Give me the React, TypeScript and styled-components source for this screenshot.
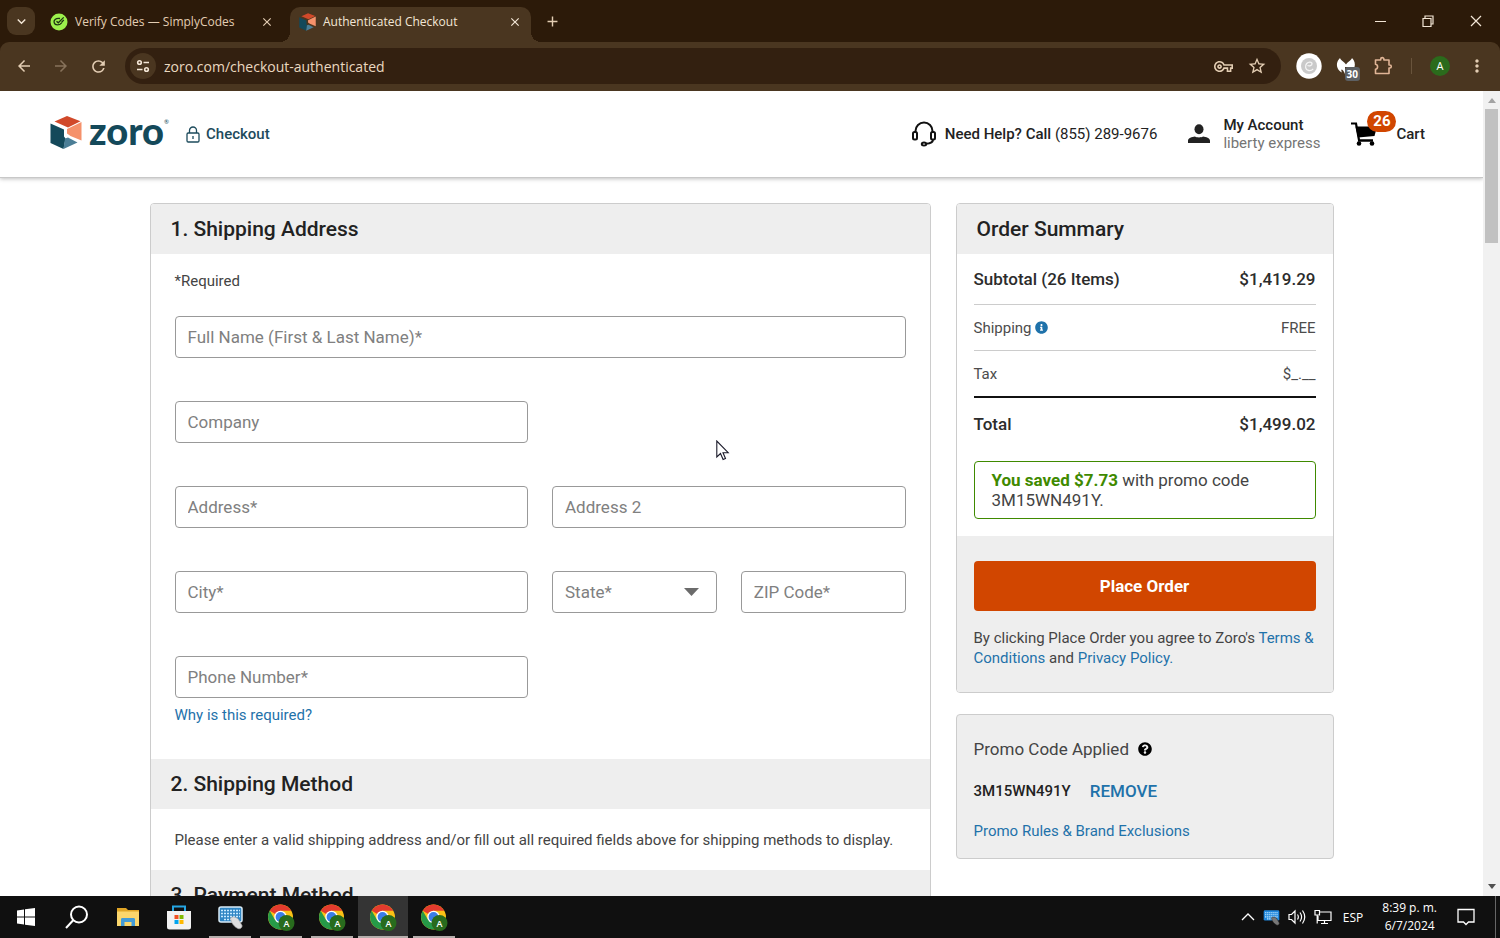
import React from 'react';
import styled, { createGlobalStyle, css } from 'styled-components';
import { FaInfoCircle, FaQuestionCircle } from 'react-icons/fa';
import {
  MdArrowBack,
  MdArrowForward,
  MdClose,
  MdAdd,
  MdKeyboardArrowDown,
  MdRefresh,
  MdStarOutline,
  MdMoreVert,
  MdOutlineVpnKey,
} from 'react-icons/md';

const roboto = 'Roboto, "Liberation Sans", sans-serif';
const ui = '"Open Sans", "Noto Sans", sans-serif';

const GlobalStyle = createGlobalStyle`
  *, *::before, *::after { box-sizing: border-box; }
  body { margin: 0; background: #fff; font-family: ${roboto}; color: #444; }
  button, input, select { font: inherit; margin: 0; }
  button { border: 0; padding: 0; background: none; color: inherit; cursor: pointer; }
  svg { display: block; flex: none; }
  h1, h2, p, dl, dd, dt { margin: 0; }
  a { text-decoration: none; }
`;

const Screen = styled.div`
  display: flex;
  flex-direction: column;
  height: 100vh;
  overflow: hidden;
  position: relative;
`;

/* ---------- Browser chrome ---------- */

const TabStrip = styled.div`
  display: flex;
  align-items: center;
  flex: none;
  height: 42px;
  padding-left: 7px;
  background: #2c1a09;
  color: #e3cdb3;
  font-family: ${ui};
`;

const TabSearch = styled.button`
  display: grid;
  place-items: center;
  width: 28px;
  height: 28px;
  border-radius: 9px;
  background: #4a3620;
  color: #f3e6d6;
`;

const Tab = styled.div<{ $active?: boolean }>`
  position: relative;
  display: flex;
  align-items: center;
  gap: 7px;
  align-self: flex-end;
  width: 247px;
  height: 35px;
  margin-left: 8px;
  padding: 0 15px 6px 7px;
  font-size: 12px;
  ${(p) =>
    p.$active &&
    css`
      width: 241px;
      margin-left: 0;
      padding: 0 8px 6px 9px;
      border-radius: 10px 10px 0 0;
      background: #4a3620;
      color: #f3e6d6;
      &::before,
      &::after {
        content: '';
        position: absolute;
        bottom: 0;
        width: 10px;
        height: 10px;
      }
      &::before {
        left: -10px;
        background: radial-gradient(circle at 0 0, transparent 10px, #4a3620 10px);
      }
      &::after {
        right: -10px;
        background: radial-gradient(circle at 100% 0, transparent 10px, #4a3620 10px);
      }
    `}
`;

const TabTitle = styled.span`
  flex: 1;
  white-space: nowrap;
`;

const IconButton = styled.button<{ $size?: number; $dim?: boolean }>`
  display: grid;
  place-items: center;
  flex: none;
  width: ${(p) => p.$size ?? 17}px;
  height: ${(p) => p.$size ?? 17}px;
  opacity: ${(p) => (p.$dim ? 0.4 : 1)};
`;

const NewTab = styled(IconButton)`
  margin-left: 8px;
`;

const WindowControls = styled.div`
  display: flex;
  margin-left: auto;
  color: #f3e6d6;
`;

const WindowButton = styled.button`
  display: grid;
  place-items: center;
  width: 48px;
  height: 42px;
`;

const ToolbarBack = styled.div`
  flex: none;
  background: #2c1a09;
`;

const Toolbar = styled.div`
  display: flex;
  align-items: center;
  height: 49px;
  padding: 0 8px 1px 9px;
  gap: 7px;
  border-radius: 9px 9px 0 0;
  background: #4a3620;
  color: #e3cdb3;
  font-family: ${ui};
`;

const Omnibox = styled.div`
  display: flex;
  align-items: center;
  flex: 1;
  height: 36px;
  margin: 0 6px 0 5px;
  padding: 0 9px 0 5px;
  gap: 4px;
  border-radius: 18px;
  background: #332010;
`;

const SiteInfo = styled.button`
  display: grid;
  place-items: center;
  width: 26px;
  height: 26px;
  border-radius: 50%;
  background: #4a3620;
  color: #f3e6d6;
`;

const UrlInput = styled.input`
  flex: 1;
  min-width: 0;
  padding: 0 0 0 4px;
  border: 0;
  outline: 0;
  background: transparent;
  color: #ead8c0;
  font-size: 14px;
`;

const Extension = styled.button`
  position: relative;
  display: grid;
  place-items: center;
  width: 30px;
  height: 30px;
`;

const ExtensionBadge = styled.span`
  position: absolute;
  right: 1px;
  bottom: 0;
  padding: 0 2px;
  border-radius: 3px;
  background: #5d6063;
  color: #fff;
  font-size: 10px;
  font-weight: 700;
  line-height: 14px;
`;

const Divider = styled.span`
  width: 1px;
  height: 16px;
  margin: 0 6px;
  background: #69543c;
`;

const Avatar = styled.button`
  width: 20px;
  height: 20px;
  margin: 0 5px;
  border-radius: 50%;
  background: #2b6b1c;
  color: #fff;
  font-size: 11px;
  line-height: 20px;
`;

/* ---------- Site ---------- */

const Viewport = styled.div`
  display: flex;
  flex: 1;
  min-height: 0;
`;

const Page = styled.div`
  flex: 1;
  min-width: 0;
  overflow: hidden;
  background: #fff;
`;

const SiteHeader = styled.header`
  display: flex;
  align-items: center;
  height: 87px;
  padding: 0 58px 0 50px;
  border-bottom: 1px solid #c8c8c8;
  box-shadow: 0 1px 4px rgba(0, 0, 0, 0.25);
  color: #222;
  font-size: 15px;
`;

const Logo = styled.a`
  display: flex;
  align-items: center;
  gap: 7px;
  padding-bottom: 3px;
  color: #14495a;
`;

const Wordmark = styled.span`
  display: flex;
  padding-bottom: 6px;
  font-family: Lato, sans-serif;
  font-size: 38px;
  font-weight: 900;
  line-height: 32px;

  sup {
    padding-top: 5px;
    font-size: 6px;
    font-weight: 400;
    line-height: 6px;
  }
`;

const CheckoutMark = styled.h1`
  display: flex;
  align-items: center;
  gap: 6px;
  margin-left: 17px;
  color: #1d4b5c;
  font-size: 15px;
  font-weight: 500;
`;

const HeaderLinks = styled.nav`
  display: flex;
  align-items: center;
  gap: 31px;
  margin-left: auto;
`;

const HeaderLink = styled.a<{ $gap: number }>`
  position: relative;
  display: flex;
  align-items: center;
  gap: ${(p) => p.$gap}px;
  color: #222;
  line-height: 18px;
  white-space: nowrap;

  b {
    font-weight: 500;
  }
  small {
    display: block;
    color: #757575;
    font-size: 15px;
  }
`;

const CartCount = styled.span`
  position: absolute;
  left: 16px;
  top: -11px;
  width: 29px;
  height: 21px;
  border-radius: 11px;
  background: #d14600;
  color: #fff;
  font-size: 15px;
  font-weight: 700;
  line-height: 21px;
  text-align: center;
`;

const Columns = styled.main`
  display: grid;
  grid-template-columns: 781fr 378fr;
  gap: 25px;
  align-items: start;
  max-width: 1184px;
  margin: 25px auto 0;
`;

const Card = styled.section<{ $muted?: boolean }>`
  border: 1px solid #ccc;
  border-radius: 4px;
  overflow: hidden;
  background: ${(p) => (p.$muted ? '#eee' : '#fff')};
`;

const Sidebar = styled.aside`
  display: grid;
  gap: 21px;
`;

const SectionTitle = styled.h2`
  padding: 0 20px;
  background: #eee;
  color: #222;
  font-size: 21px;
  font-weight: 500;
  line-height: 50px;
`;

const AddressForm = styled.form`
  padding: 17px 24px 34px;
`;

const Note = styled.p`
  font-size: 15px;
  line-height: 20px;
`;

const Fields = styled.div`
  display: grid;
  grid-template-columns: repeat(4, 1fr);
  gap: 43px 24px;
  margin-top: 25px;
`;

const fieldBox = css`
  width: 100%;
  height: 42px;
  padding: 0 12px;
  border: 1px solid #999;
  border-radius: 4px;
  background: #fff;
  color: #808080;
  font-size: 17px;
  &::placeholder {
    color: #808080;
    opacity: 1;
  }
`;

const Cell = styled.div<{ $span: number }>`
  position: relative;
  grid-column: span ${(p) => p.$span};
`;

const LeadingCell = styled(Cell)`
  grid-column: 1 / span ${(p) => p.$span};
`;

const TextField = styled.input`
  ${fieldBox}
`;

const SelectField = styled.select`
  ${fieldBox}
  appearance: none;
`;

const SelectArrow = styled.svg`
  position: absolute;
  right: 18px;
  top: 17px;
  pointer-events: none;
`;

const TextLink = styled.a`
  color: #1f72aa;
`;

const HelpLink = styled(TextLink)`
  display: block;
  width: fit-content;
  margin-top: 7px;
  font-size: 15px;
  line-height: 20px;
`;

const MethodNote = styled(Note)`
  padding: 21px 24px 20px;
`;

const Totals = styled.dl`
  padding: 0 17px;
`;

const TotalRow = styled.div<{ $strong?: boolean; $height: number; $rule?: 'light' | 'heavy' }>`
  display: flex;
  align-items: center;
  justify-content: space-between;
  height: ${(p) => p.$height}px;
  border-bottom: ${(p) =>
    p.$rule === 'heavy' ? '2px solid #111' : p.$rule === 'light' ? '1px solid #ccc' : '0'};
  color: ${(p) => (p.$strong ? '#2c2c2c' : '#4c4c4c')};
  font-size: ${(p) => (p.$strong ? 17 : 15)}px;
  font-weight: ${(p) => (p.$strong ? 500 : 400)};

  dt {
    display: flex;
    align-items: center;
    gap: 3px;
  }
`;

const Savings = styled.p`
  margin: 11px 17px 17px;
  padding: 8px 17px;
  border: 1px solid #3f8a00;
  border-radius: 4px;
  font-size: 17px;
  line-height: 20px;

  b {
    color: #3f8a00;
    font-weight: 700;
  }
`;

const OrderAction = styled.div`
  padding: 25px 17px 24px;
  background: #eee;
  font-size: 15px;
  line-height: 20px;
`;

const PlaceOrder = styled.button`
  width: 100%;
  height: 50px;
  margin-bottom: 17px;
  border-radius: 4px;
  background: #d14600;
  color: #fff;
  font-size: 17px;
  font-weight: 700;
`;

const PromoBody = styled.div`
  display: grid;
  gap: 20px;
  padding: 22px 17px 17px;
  line-height: 20px;
  font-size: 15px;
`;

const PromoLine = styled.div<{ $gap: number }>`
  display: flex;
  align-items: center;
  gap: ${(p) => p.$gap}px;
`;

const PromoHeading = styled.h2`
  font-size: 17px;
  font-weight: 400;
  line-height: 24px;
`;

const PromoCode = styled.span`
  color: #222;
  font-weight: 500;
`;

const RemoveButton = styled.button`
  color: #1f72aa;
  font-size: 17px;
  font-weight: 500;
`;

const ScrollTrack = styled.div`
  display: flex;
  flex-direction: column;
  align-items: center;
  flex: none;
  width: 17px;
  padding: 7px 0;
  background: #f1f1f1;
`;

const ScrollThumb = styled.div`
  width: 13px;
  height: 17%;
  margin: 6px 0 auto;
  background: #c1c1c1;
`;

/* ---------- Taskbar ---------- */

const Taskbar = styled.footer`
  display: flex;
  align-items: center;
  flex: none;
  height: 42px;
  padding-left: 1px;
  background: #101010;
  color: #fff;
  font-family: ${ui};
  font-size: 12px;
`;

const TaskButton = styled.button<{ $open?: boolean; $active?: boolean }>`
  position: relative;
  display: grid;
  place-items: center;
  flex: none;
  width: 50px;
  height: 42px;
  margin-right: 1px;
  background: ${(p) => (p.$active ? '#343434' : 'transparent')};
  &::after {
    content: '';
    position: absolute;
    bottom: 0;
    left: ${(p) => (p.$active ? 0 : 4)}px;
    right: ${(p) => (p.$active ? 0 : 4)}px;
    height: 2px;
    background: ${(p) => (p.$open ? '#b5aeac' : 'transparent')};
  }
`;

const Tray = styled.div`
  display: flex;
  align-items: center;
  gap: 8px;
  height: 42px;
  margin-left: auto;
`;

const Language = styled.span`
  margin-left: 3px;
`;

const Clock = styled.time`
  margin: 0 12px 0 11px;
  line-height: 18px;
  text-align: center;
`;

const ShowDesktop = styled.span`
  width: 5px;
  height: 42px;
  margin-left: 12px;
  border-left: 1px solid #666;
`;

const Pointer = styled.svg`
  position: absolute;
  left: 716px;
  top: 440px;
`;

/* ---------- Drawings ---------- */

const Cube = ({ size }: { size: number }) => (
  <svg width={size} height={size + 1} viewBox="0 0 32 33" aria-hidden="true">
    <path d="M4.500 5.500 17 0 30.500 5.200 18 11.500Z" fill="#d1492a" />
    <path d="M31.500 6v18.500L20.500 20 17 17.500V13Z" fill="#f5916b" />
    <path d="M.5 7.500 14 13.500v7l1.500 2L13.500 33 .5 27Z" fill="#14495a" />
    <path d="M15 22.500 18 21.500 27.500 26.500 13.500 33Z" fill="#4b7e96" />
  </svg>
);

const SimplyIcon = () => (
  <svg width="18" height="18" viewBox="0 0 18 18" aria-hidden="true">
    <circle cx="9" cy="9" r="8.5" fill="#9cf04c" />
    <path d="M10 5.500C5.500 4.800 3.400 7.500 4.200 9.800c.8 2.800 5.200 2.800 7.400 0M6.500 8.200l1.800 1.600 5.400-5.400M11.500 9.500l2.300-2.600" fill="none" stroke="#1d3313" strokeWidth="1.300" />
  </svg>
);

const TuneIcon = () => (
  <svg width="14" height="14" viewBox="0 0 14 14" fill="none" stroke="currentColor" strokeWidth="1.6" aria-hidden="true">
    <circle cx="3.5" cy="3.5" r="1.8" />
    <path d="M7.5 3.5H13M1 10.5h5.5" />
    <circle cx="10.5" cy="10.5" r="1.8" />
  </svg>
);

const SwirlIcon = () => (
  <svg width="26" height="26" viewBox="0 0 26 26" aria-hidden="true">
    <circle cx="13" cy="13" r="12.7" fill="#fff" />
    <circle cx="13" cy="13" r="8" fill="#cacaca" />
    <path d="M11.500 12.500c2 1 4.500 0 4.500-1.700 0-2.300-3.700-2.200-5.300-.3-2.200 2.700-1.200 6.700 2 7 1.800.2 3.500-.5 4.500-1.700" fill="none" stroke="#f5f5f5" strokeWidth="1.3" />
  </svg>
);

const MalwareIcon = () => (
  <svg width="20" height="20" viewBox="0 0 20 20" fill="#fff" aria-hidden="true">
    <path d="M4 2C4.500 4 8 5.500 10 8.500 12 5.500 15.500 4 16 2 18.500 4.500 19.500 8 18.500 11H9v7C8 15.500 6.500 13.500 5.500 13.500c-.5 1 0 2 .5 3C2 14.500.5 11 1 7.500 1.300 5.500 2.500 3.500 4 2Z" />
  </svg>
);

const PuzzleIcon = () => (
  <svg width="20" height="20" viewBox="0 0 20 20" fill="none" stroke="#e0b596" strokeWidth="1.600" strokeLinejoin="round" aria-hidden="true">
    <path d="M2.500 4H7.700V3.200a1.600 1.600 0 0 1 3.200 0V4H16V9h.8a1.500 1.500 0 0 1 0 3H16v5.500H2.500v-4.200a2.600 2.600 0 0 0 0-5.100Z" />
  </svg>
);

const LockIcon = () => (
  <svg width="14" height="17" viewBox="0 0 14 17" fill="none" stroke="currentColor" strokeWidth="1.3" aria-hidden="true">
    <rect x="1" y="7" width="12" height="9" rx="1.2" />
    <path d="M3.500 7V4.500a3.500 3.500 0 0 1 7 0V7M7 10v3" />
  </svg>
);

const HeadsetIcon = () => (
  <svg width="26" height="26" viewBox="0 0 26 26" fill="none" stroke="#111" strokeWidth="2" aria-hidden="true">
    <path d="M4.500 11.500V10a8.500 8.500 0 0 1 17 0v1.500" />
    <rect x="2" y="11" width="4" height="7.500" rx="1.500" />
    <rect x="20" y="11" width="4" height="7.500" rx="1.500" />
    <path d="M22 18.500c0 3-3 4-7 4.300" />
    <ellipse cx="13" cy="23" rx="2.200" ry="1.500" />
  </svg>
);

const PersonIcon = () => (
  <svg width="22" height="20" viewBox="0 0 22 20" fill="#222" aria-hidden="true">
    <ellipse cx="11" cy="5.200" rx="4.500" ry="5" />
    <path d="M0 19v-2.300c0-2.500 4-3.900 7-4.200 2 1.200 6 1.200 8 0 3 .3 7 1.700 7 4.200V19Z" />
  </svg>
);

const CartIcon = () => (
  <svg width="26" height="24" viewBox="0 0 26 24" aria-hidden="true">
    <path d="M0 1.500h5L8 18" fill="none" stroke="#000" strokeWidth="2.200" />
    <path d="M4.500 4.500H26L23.500 14 7 15.500Z" fill="#000" />
    <path d="M7 18.500h15" stroke="#000" strokeWidth="2.500" />
    <circle cx="8" cy="21.500" r="2.300" />
    <circle cx="21" cy="21.500" r="2.300" />
  </svg>
);

const ScrollArrow = ({ down }: { down?: boolean }) => (
  <svg width="8" height="5" viewBox="0 0 8 5" aria-hidden="true">
    {down ? <path d="M0 0h8L4 5Z" fill="#505050" /> : <path d="M0 5h8L4 0Z" fill="#a3a3a3" />}
  </svg>
);

const WindowsIcon = () => (
  <svg width="18" height="18" viewBox="0 0 18 18" fill="#fff" aria-hidden="true">
    <path d="M0 2.500 7 1.500v7H0ZM8 1.300 18 0v8.500H8ZM0 9.500h7v7l-7-1ZM8 9.500h10V18L8 16.700Z" />
  </svg>
);

const SearchIcon = () => (
  <svg width="24" height="24" viewBox="0 0 24 24" fill="none" stroke="#fff" strokeWidth="2" aria-hidden="true">
    <circle cx="14" cy="9.500" r="8" />
    <path d="M8.200 15.300 1 23" />
  </svg>
);

const FolderIcon = () => (
  <svg width="24" height="20" viewBox="0 0 24 20" aria-hidden="true">
    <path d="M1 1h9l2 2h11v5H1Z" fill="#e0a526" />
    <path d="M1 4.500h22V19H1Z" fill="#fbd66c" />
    <path d="M5 19v-6.500c0-1 .5-1.500 1.500-1.500h11c1 0 1.500.500 1.500 1.500V19h-3.500v-4h-7v4Z" fill="#439bd6" />
  </svg>
);

const StoreIcon = () => (
  <svg width="24" height="25" viewBox="0 0 24 25" aria-hidden="true">
    <path d="M6 8V1.500h12V8" fill="none" stroke="#25a5e3" strokeWidth="2" />
    <path d="M0 6h24v16a2.500 2.500 0 0 1-2.500 2.500h-19A2.500 2.500 0 0 1 0 22Z" fill="#f2f2f2" />
    <path d="M7.500 10h4v4h-4Z" fill="#f25022" />
    <path d="M12.500 10h4v4h-4Z" fill="#7fba00" />
    <path d="M7.500 15h4v4h-4Z" fill="#00a4ef" />
    <path d="M12.500 15h4v4h-4Z" fill="#ffb900" />
  </svg>
);

const KeyboardIcon = ({ small }: { small?: boolean }) => (
  <svg width={small ? 17 : 25} height={small ? 17 : 25} viewBox="0 0 25 25" aria-hidden="true">
    <rect x="1" y="2" width="23" height="15" rx="2" fill={small ? '#1f86dc' : '#2f86c4'} stroke={small ? 'none' : '#d9ecf7'} strokeWidth="1.500" />
    <path d="M3 5.500h19M3 8.500h19M3 11.500h19M6 14.500h10" stroke="#c9ebff" strokeWidth="1.700" strokeDasharray="2 1" />
    <path
      d="M12.500 13c2-2 6-1 8 1.500l3.500 6c.5 2-2 4-4 3-3.500-1.500-7-5.500-7.500-10.500Z"
      fill={small ? '#777' : '#dedede'}
      stroke={small ? '#222' : '#aaa'}
      strokeWidth=".7"
    />
  </svg>
);

const ChromeIcon = () => (
  <svg width="28" height="28" viewBox="0 0 28 28" aria-hidden="true">
    <circle cx="13.500" cy="14" r="12.500" fill="#fbc116" />
    <path d="M13.500 14 2.700 7.750A12.500 12.500 0 0 1 24.300 7.750H13.500Z" fill="#e33b2e" />
    <path d="M2.700 7.750A12.500 12.500 0 0 0 13.500 26.500L18.900 17.100 8.100 17.100Z" fill="#269a48" />
    <circle cx="13.500" cy="14" r="6.200" fill="#fff" />
    <circle cx="13.500" cy="14" r="4.900" fill="#3b7de8" />
    <circle cx="19.500" cy="20" r="8" fill="#286b1d" />
    <text x="19.500" y="23.500" fill="#fff" fontSize="9" fontWeight="600" textAnchor="middle" fontFamily="Open Sans, sans-serif">
      A
    </text>
  </svg>
);

const VolumeIcon = () => (
  <svg width="18" height="16" viewBox="0 0 18 16" fill="none" stroke="#fff" strokeWidth="1.200" aria-hidden="true">
    <path d="M1 5.500h2.500L7 2v12l-3.500-3.500H1ZM9.500 5.500q1.700 2.500 0 5M12 3.500q3.200 4.500 0 9M14.500 1.500q4.500 6.500 0 13" />
  </svg>
);

const NetworkIcon = () => (
  <svg width="18" height="16" viewBox="0 0 18 16" fill="none" stroke="#fff" strokeWidth="1.200" aria-hidden="true">
    <path d="M6 3h11v8.500H4V7M10.500 11.500V14M7 14.500h7M1 1.500h4.500V6H1ZM3.200 6v8.500" />
  </svg>
);

const NotificationIcon = () => (
  <svg width="18" height="18" viewBox="0 0 18 18" fill="none" stroke="#fff" strokeWidth="1.300" aria-hidden="true">
    <path d="M1 1.500h16v12.500h-5.500L9 16.500 6.500 14H1Z" />
  </svg>
);

const openWindows = ['Chrome window 1', 'Chrome window 2', 'Chrome window 3', 'Chrome window 4'];

export default function App() {
  return (
    <Screen>
      <GlobalStyle />
      <TabStrip>
        <TabSearch aria-label="Search tabs">
          <MdKeyboardArrowDown size={17} />
        </TabSearch>
        <Tab>
          <SimplyIcon />
          <TabTitle>Verify Codes — SimplyCodes</TabTitle>
          <IconButton aria-label="Close tab">
            <MdClose size={14} />
          </IconButton>
        </Tab>
        <Tab $active>
          <Cube size={17} />
          <TabTitle>Authenticated Checkout</TabTitle>
          <IconButton aria-label="Close tab">
            <MdClose size={14} />
          </IconButton>
        </Tab>
        <NewTab $size={26} aria-label="New tab">
          <MdAdd size={17} />
        </NewTab>
        <WindowControls>
          <WindowButton aria-label="Minimize">
            <svg width="12" height="12" viewBox="0 0 12 12" stroke="currentColor"><path d="M1 6.500h11" /></svg>
          </WindowButton>
          <WindowButton aria-label="Restore">
            <svg width="12" height="12" viewBox="0 0 12 12" fill="none" stroke="currentColor" strokeWidth="1.200"><path d="M1 3.500h8v8H1ZM3 3V1h8v8H9" /></svg>
          </WindowButton>
          <WindowButton aria-label="Close">
            <svg width="12" height="12" viewBox="0 0 12 12" stroke="currentColor" strokeWidth="1.200"><path d="m1 1 10 10M11 1 1 11" /></svg>
          </WindowButton>
        </WindowControls>
      </TabStrip>

      <ToolbarBack>
        <Toolbar>
          <IconButton $size={30} aria-label="Back"><MdArrowBack size={18} /></IconButton>
          <IconButton $size={30} $dim aria-label="Forward"><MdArrowForward size={18} /></IconButton>
          <IconButton $size={30} aria-label="Reload"><MdRefresh size={19} /></IconButton>
          <Omnibox>
            <SiteInfo aria-label="View site information"><TuneIcon /></SiteInfo>
            <UrlInput aria-label="Address" defaultValue="zoro.com/checkout-authenticated" />
            <IconButton $size={30} aria-label="Passwords"><MdOutlineVpnKey size={19} /></IconButton>
            <IconButton $size={30} aria-label="Bookmark"><MdStarOutline size={20} /></IconButton>
          </Omnibox>
          <Extension aria-label="Extension"><SwirlIcon /></Extension>
          <Extension aria-label="Malware blocker">
            <MalwareIcon />
            <ExtensionBadge>30</ExtensionBadge>
          </Extension>
          <IconButton $size={30} aria-label="Extensions"><PuzzleIcon /></IconButton>
          <Divider />
          <Avatar aria-label="Profile">A</Avatar>
          <IconButton $size={30} aria-label="Menu"><MdMoreVert size={20} /></IconButton>
        </Toolbar>
      </ToolbarBack>

      <Viewport>
        <Page>
          <SiteHeader>
            <Logo href="#" aria-label="Zoro home">
              <Cube size={32} />
              <Wordmark>zoro<sup>®</sup></Wordmark>
            </Logo>
            <CheckoutMark>
              <LockIcon />
              Checkout
            </CheckoutMark>
            <HeaderLinks>
              <HeaderLink href="#" $gap={8}>
                <HeadsetIcon />
                <span><b>Need Help? Call</b> (855) 289-9676</span>
              </HeaderLink>
              <HeaderLink href="#" $gap={13}>
                <PersonIcon />
                <span>
                  <b>My Account</b>
                  <small>liberty express</small>
                </span>
              </HeaderLink>
              <HeaderLink href="#" $gap={19}>
                <CartIcon />
                <CartCount>26</CartCount>
                <b>Cart</b>
              </HeaderLink>
            </HeaderLinks>
          </SiteHeader>

          <Columns>
            <Card>
              <SectionTitle>1. Shipping Address</SectionTitle>
              <AddressForm>
                <Note>*Required</Note>
                <Fields>
                  <Cell $span={4}><TextField aria-label="Full Name" placeholder="Full Name (First & Last Name)*" /></Cell>
                  <LeadingCell $span={2}><TextField aria-label="Company" placeholder="Company" /></LeadingCell>
                  <LeadingCell $span={2}><TextField aria-label="Address" placeholder="Address*" /></LeadingCell>
                  <Cell $span={2}><TextField aria-label="Address 2" placeholder="Address 2" /></Cell>
                  <LeadingCell $span={2}><TextField aria-label="City" placeholder="City*" /></LeadingCell>
                  <Cell $span={1}>
                    <SelectField aria-label="State" defaultValue="">
                      <option value="">State*</option>
                    </SelectField>
                    <SelectArrow width="15" height="8" viewBox="0 0 15 8" aria-hidden="true">
                      <path d="M0 0h15L7.500 8Z" fill="#6b6b6b" />
                    </SelectArrow>
                  </Cell>
                  <Cell $span={1}><TextField aria-label="ZIP Code" placeholder="ZIP Code*" /></Cell>
                  <LeadingCell $span={2}><TextField aria-label="Phone Number" type="tel" placeholder="Phone Number*" /></LeadingCell>
                </Fields>
                <HelpLink href="#">Why is this required?</HelpLink>
              </AddressForm>
              <SectionTitle>2. Shipping Method</SectionTitle>
              <MethodNote>
                Please enter a valid shipping address and/or fill out all required fields above for shipping methods to display.
              </MethodNote>
              <SectionTitle>3. Payment Method</SectionTitle>
            </Card>

            <Sidebar>
              <Card>
                <SectionTitle>Order Summary</SectionTitle>
                <Totals>
                  <TotalRow $strong $height={51} $rule="light">
                    <dt>Subtotal (26 Items)</dt>
                    <dd>$1,419.29</dd>
                  </TotalRow>
                  <TotalRow $height={46} $rule="light">
                    <dt>Shipping <FaInfoCircle size={13} color="#1f72aa" /></dt>
                    <dd>FREE</dd>
                  </TotalRow>
                  <TotalRow $height={47} $rule="heavy">
                    <dt>Tax</dt>
                    <dd>$_.__</dd>
                  </TotalRow>
                  <TotalRow $strong $height={52}>
                    <dt>Total</dt>
                    <dd>$1,499.02</dd>
                  </TotalRow>
                </Totals>
                <Savings>
                  <b>You saved $7.73</b> with promo code 3M15WN491Y.
                </Savings>
                <OrderAction>
                  <PlaceOrder>Place Order</PlaceOrder>
                  <p>
                    By clicking Place Order you agree to Zoro's <TextLink href="#">Terms &amp; Conditions</TextLink> and{' '}
                    <TextLink href="#">Privacy Policy.</TextLink>
                  </p>
                </OrderAction>
              </Card>
              <Card $muted>
                <PromoBody>
                  <PromoLine $gap={9}>
                    <PromoHeading>Promo Code Applied</PromoHeading>
                    <FaQuestionCircle size={14} color="#000" />
                  </PromoLine>
                  <PromoLine $gap={19}>
                    <PromoCode>3M15WN491Y</PromoCode>
                    <RemoveButton>REMOVE</RemoveButton>
                  </PromoLine>
                  <TextLink href="#">Promo Rules &amp; Brand Exclusions</TextLink>
                </PromoBody>
              </Card>
            </Sidebar>
          </Columns>
        </Page>
        <ScrollTrack>
          <ScrollArrow />
          <ScrollThumb />
          <ScrollArrow down />
        </ScrollTrack>
      </Viewport>

      <Taskbar>
        <TaskButton aria-label="Start"><WindowsIcon /></TaskButton>
        <TaskButton aria-label="Search"><SearchIcon /></TaskButton>
        <TaskButton aria-label="File Explorer"><FolderIcon /></TaskButton>
        <TaskButton aria-label="Store"><StoreIcon /></TaskButton>
        <TaskButton $open aria-label="On-screen keyboard"><KeyboardIcon /></TaskButton>
        {openWindows.map((name, i) => (
          <TaskButton key={name} $open $active={i === 2} aria-label={name}><ChromeIcon /></TaskButton>
        ))}
        <Tray>
          <svg width="14" height="8" viewBox="0 0 14 8" fill="none" stroke="#fff" strokeWidth="1.300" aria-hidden="true"><path d="m1 7 6-6 6 6" /></svg>
          <KeyboardIcon small />
          <VolumeIcon />
          <NetworkIcon />
          <Language>ESP</Language>
          <Clock>8:39 p. m.<br />6/7/2024</Clock>
          <NotificationIcon />
          <ShowDesktop />
        </Tray>
      </Taskbar>

      <Pointer width="14" height="21" viewBox="0 0 14 21" aria-hidden="true">
        <path d="M.8 1v16l3.700-3.500 2.600 6 2.400-1-2.500-5.800h5.200Z" fill="#fff" stroke="#1a1a2a" strokeWidth="1.100" />
      </Pointer>
    </Screen>
  );
}
